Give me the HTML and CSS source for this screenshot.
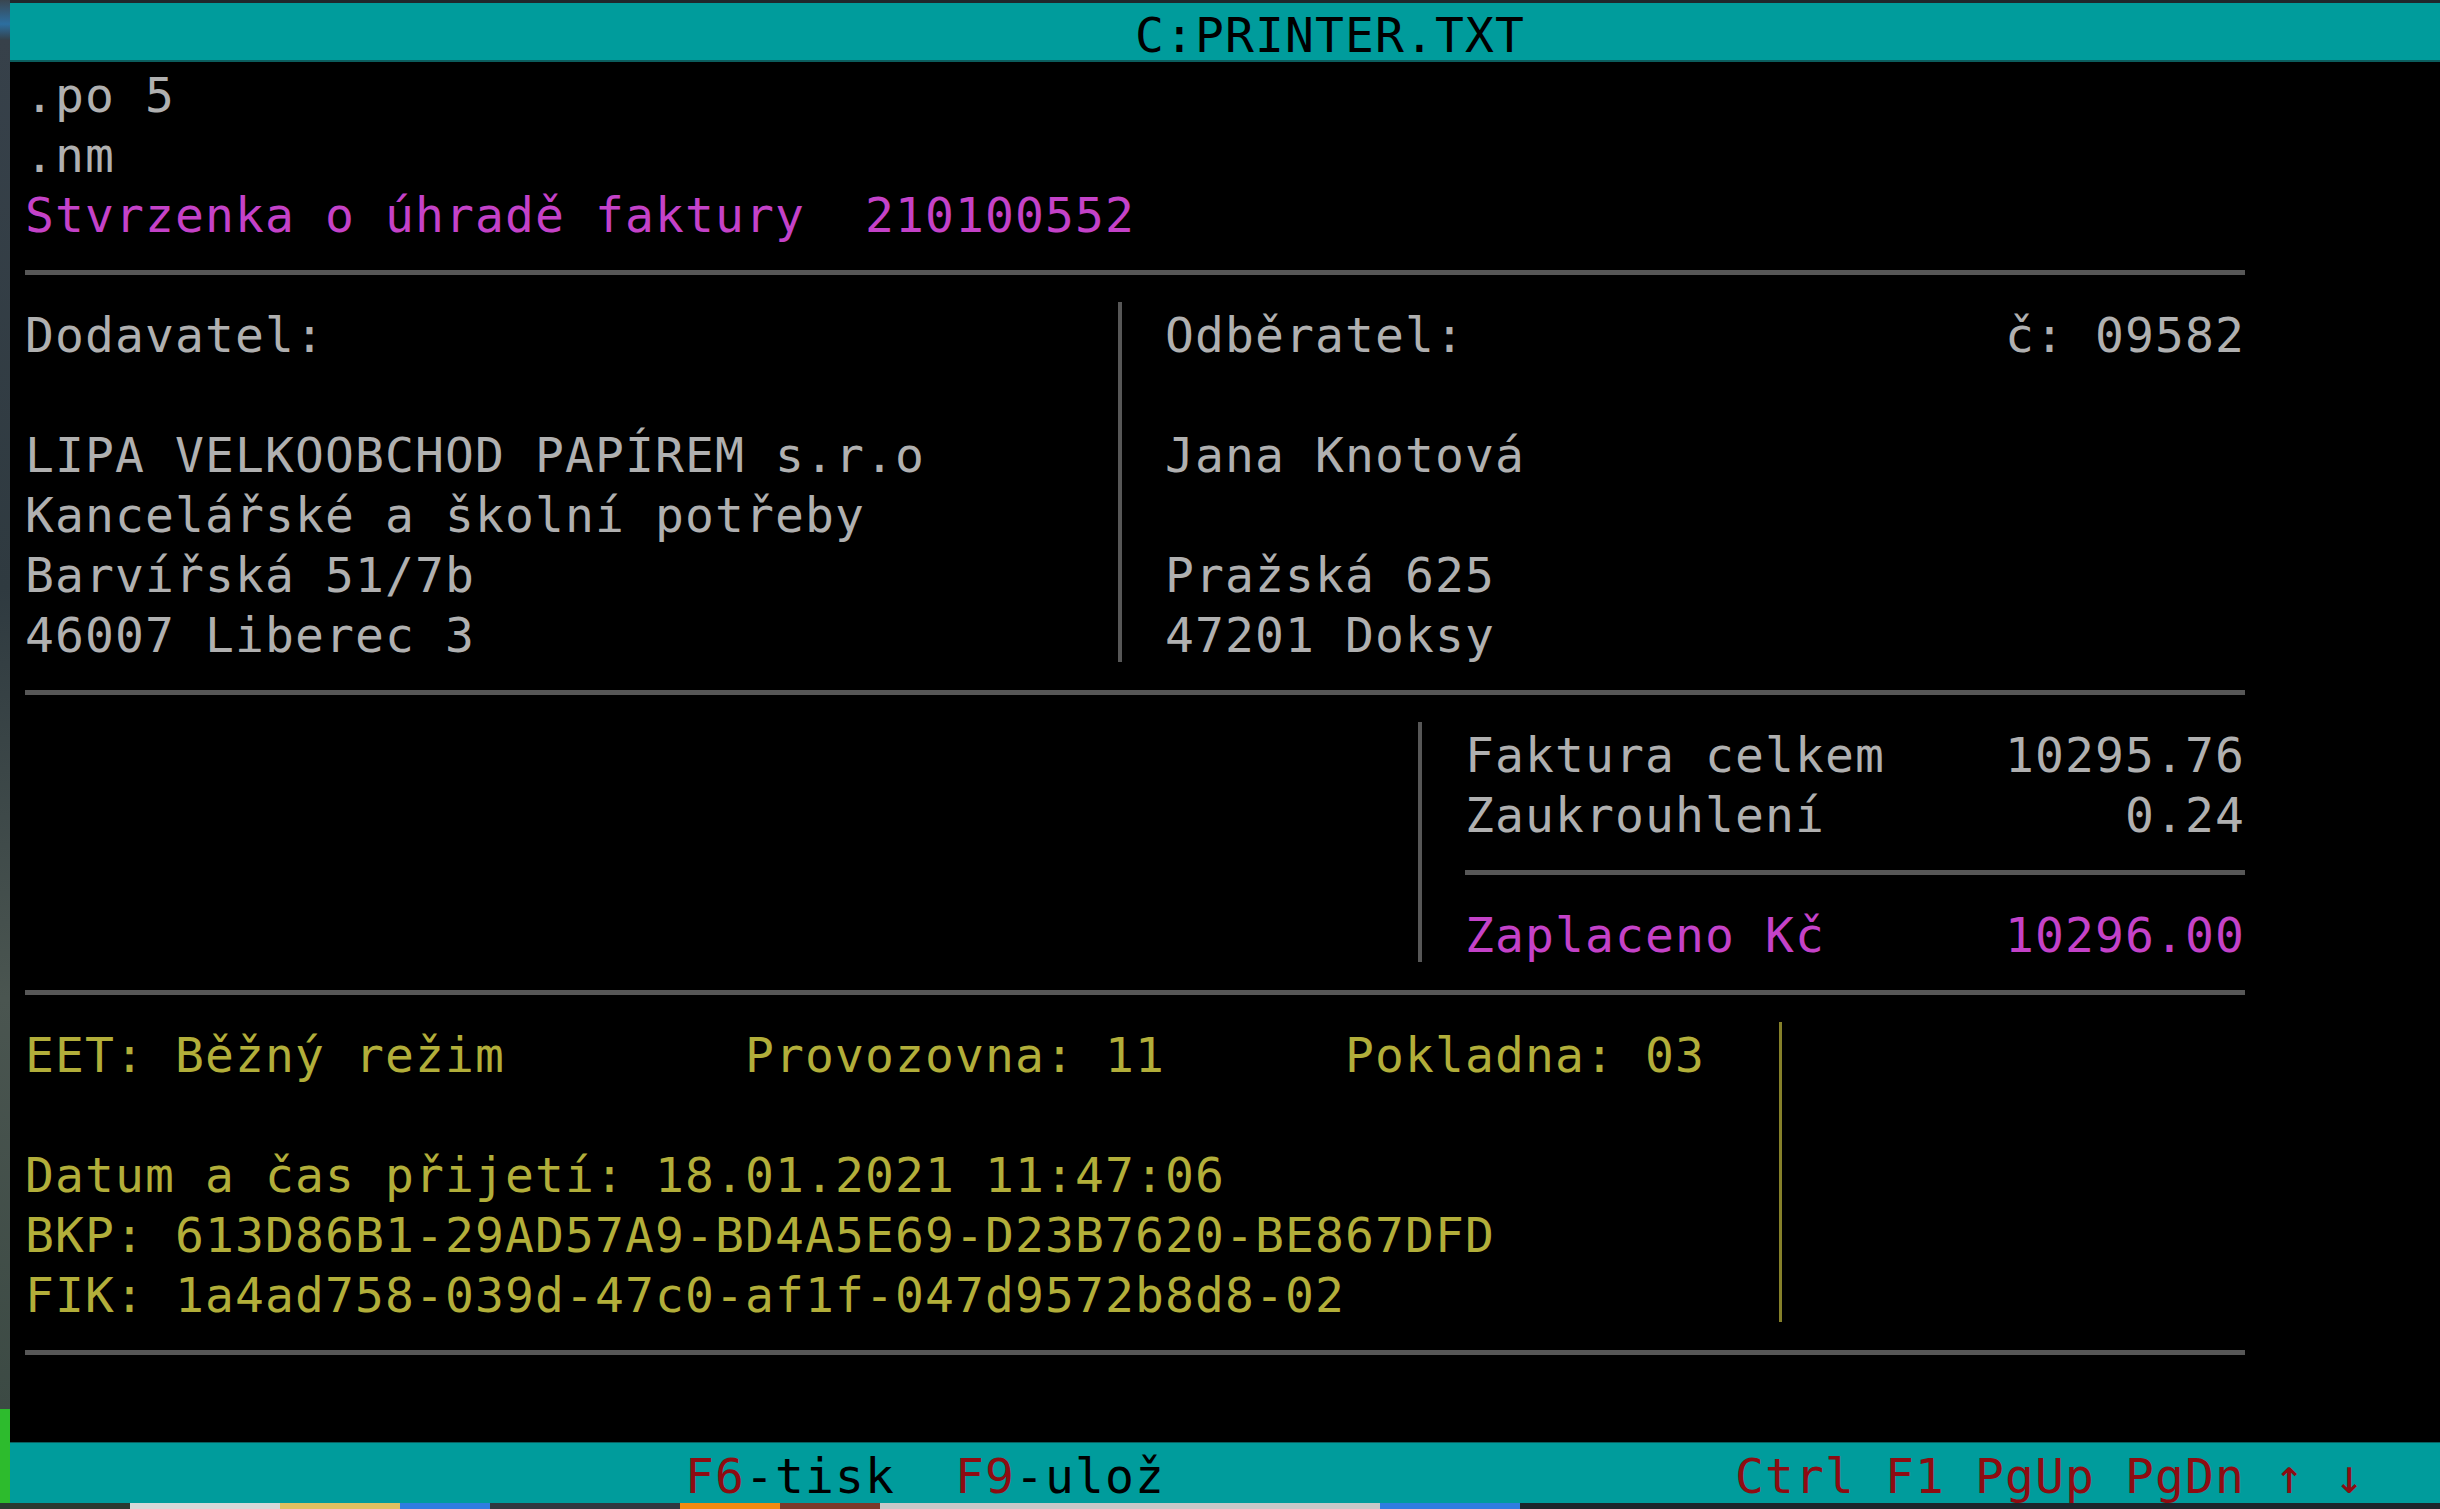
FILE: index.html
```html
<!DOCTYPE html>
<html lang="cs">
<head>
<meta charset="utf-8">
<title>C:PRINTER.TXT</title>
<link rel="stylesheet" href="styles.css">
</head>
<body>
<div class="desktop">
  <div class="wall">
    <div class="wall-top"></div>
    <div class="wall-mid"></div>
    <div class="wall-green"></div>
  </div>
  <div class="window">
    <div class="titlebar"><span class="title">C:PRINTER.TXT</span></div>
    <div class="screen">
      <div class="row">.po 5</div>
      <div class="row">.nm</div>
      <div class="row mag">Stvrzenka o úhradě faktury  210100552</div>
      <div class="rule"><span class="hline full"></span></div>

      <div class="parties">
        <div class="col supplier">
          <div class="row">Dodavatel:</div>
          <div class="row"></div>
          <div class="row">LIPA VELKOOBCHOD PAPÍREM s.r.o</div>
          <div class="row">Kancelářské a školní potřeby</div>
          <div class="row">Barvířská 51/7b</div>
          <div class="row">46007 Liberec 3</div>
        </div>
        <div class="vline"></div>
        <div class="col customer">
          <div class="row split"><span>Odběratel:</span><span>č: 09582</span></div>
          <div class="row"></div>
          <div class="row">Jana Knotová</div>
          <div class="row"></div>
          <div class="row">Pražská 625</div>
          <div class="row">47201 Doksy</div>
        </div>
      </div>

      <div class="rule"><span class="hline full"></span></div>

      <div class="totals">
        <div class="totals-gap"></div>
        <div class="vline"></div>
        <div class="col sums">
          <div class="row split"><span>Faktura celkem</span><span>10295.76</span></div>
          <div class="row split"><span>Zaukrouhlení</span><span>0.24</span></div>
          <div class="rule"><span class="hline sub"></span></div>
          <div class="row split mag"><span>Zaplaceno Kč</span><span>10296.00</span></div>
        </div>
      </div>

      <div class="rule"><span class="hline full"></span></div>

      <div class="eet">
        <div class="col eet-info">
          <div class="row eet-head"><span>EET: Běžný režim</span><span>Provozovna: 11</span><span>Pokladna: 03</span></div>
          <div class="row"></div>
          <div class="row">Datum a čas přijetí: 18.01.2021 11:47:06</div>
          <div class="row">BKP: 613D86B1-29AD57A9-BD4A5E69-D23B7620-BE867DFD</div>
          <div class="row">FIK: 1a4ad758-039d-47c0-af1f-047d9572b8d8-02</div>
        </div>
        <div class="vline olive-line"></div>
      </div>

      <div class="rule"><span class="hline full"></span></div>
      <div class="row"></div>
    </div>
    <div class="statusbar">
      <span class="keys-left"><span class="key">F6</span>-tisk  <span class="key">F9</span>-ulož</span><span class="key">Ctrl F1 PgUp PgDn ↑ ↓</span>
    </div>
  </div>
</div>
<div class="taskbar">
  <span class="tb tb1"></span><span class="tb tb2"></span><span class="tb tb3"></span><span class="tb tb4"></span><span class="tb tb5"></span><span class="tb tb6"></span><span class="tb tb7"></span><span class="tb tb8"></span><span class="tb tb9"></span>
</div>
</body>
</html>
```

FILE: styles.css
```css
* {
  box-sizing: border-box;
}

html, body {
  margin: 0;
  padding: 0;
}

body {
  width: 2440px;
  height: 1509px;
  overflow: hidden;
  background: #1f272c;
  font-family: "DejaVu Sans Mono", "Liberation Mono", monospace;
  font-size: 48px;
  letter-spacing: calc(30px - 1ch);
}

.desktop {
  display: flex;
  height: 1503px;
}

/* desktop wallpaper sliver on the left */
.wall {
  width: 10px;
  display: flex;
  flex-direction: column;
}

.wall-top {
  height: 40px;
  background: linear-gradient(180deg, #3a4650, #2c6fa0 60%, #34414a);
}

.wall-mid {
  flex: 1;
  background: linear-gradient(180deg, #37414a 0%, #2f3a40 40%, #4a5550 70%, #3c4a44 100%);
}

.wall-green {
  height: 94px;
  background: #2dbb2d;
}

.window {
  width: 2430px;
  margin-top: 3px;
  display: flex;
  flex-direction: column;
}

.titlebar {
  height: 59px;
  background: #009c9c;
  border-bottom: 2px solid #0b5e5e;
  padding: 7px 0 0 1125px;
  line-height: 50px;
  color: #000;
  white-space: pre;
}

.screen {
  flex: 1;
  background: #000;
  padding-left: 15px;
  color: #b0b0b0;
}

.row {
  height: 60px;
  padding-top: 7px;
  line-height: 53px;
  white-space: pre;
}

.mag {
  color: #c442c8;
}

.split {
  display: flex;
  justify-content: space-between;
}

.rule {
  height: 60px;
  display: flex;
  align-items: center;
}

.hline {
  display: block;
  height: 5px;
  background: #575757;
}

.hline.full {
  width: 2220px;
}

.hline.sub {
  width: 780px;
}

.vline {
  width: 30px;
  display: flex;
  justify-content: center;
}

.vline::before {
  content: "";
  width: 4px;
  background: #575757;
}

.olive-line::before {
  width: 3px;
  background: #85802a;
}

.parties,
.totals,
.eet {
  display: flex;
}

.supplier {
  width: 1080px;
}

.customer {
  width: 1110px;
  padding-left: 30px;
}

.totals-gap {
  width: 1380px;
}

.sums {
  width: 810px;
  padding-left: 30px;
}

.eet {
  color: #b2ae3a;
}

.eet-info {
  width: 1740px;
}

.eet-head {
  display: grid;
  grid-template-columns: 720px 600px auto;
}

.statusbar {
  height: 61px;
  background: #009c9c;
  border-top: 1px solid #0b5e5e;
  padding: 6px 0 0 675px;
  line-height: 54px;
  color: #000;
  white-space: pre;
  display: flex;
}

.keys-left {
  width: 1050px;
}

.key {
  color: #8e0c12;
}

.taskbar {
  height: 6px;
  display: flex;
  background: #1c262c;
}

.tb {
  display: block;
  height: 6px;
}

.tb1 { width: 130px; background: #2a3a30; }
.tb2 { width: 150px; background: #d8d8d8; }
.tb3 { width: 120px; background: #e0c060; }
.tb4 { width: 90px;  background: #2f7de0; }
.tb5 { width: 190px; background: #303840; }
.tb6 { width: 100px; background: #f08a10; }
.tb7 { width: 100px; background: #7a3a2a; }
.tb8 { width: 500px; background: #c8c8c8; }
.tb9 { width: 140px; background: #2f7de0; }
```
